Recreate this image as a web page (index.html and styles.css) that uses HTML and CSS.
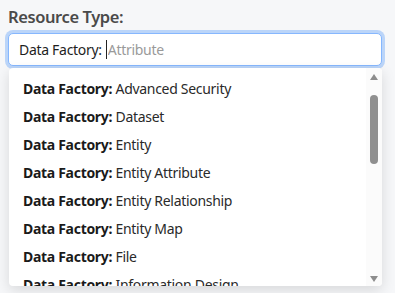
FILE: index.html
```html
<!doctype html>
<html lang="en">
  <head>
    <meta charset="UTF-8" />
    <title>Resource Type</title>
    <link rel="stylesheet" href="styles.css">
  </head>
  <body>
    <div class="field">
      <label for="resource-type">Resource Type:</label>
      <div class="combo">
        <span class="prefix">Data Factory:</span>
        <input id="resource-type" type="text" placeholder="Attribute" />
      </div>
      <div class="dropdown">
        <ul class="options">
          <li><b>Data Factory:</b> Advanced Security</li>
          <li><b>Data Factory:</b> Dataset</li>
          <li><b>Data Factory:</b> Entity</li>
          <li><b>Data Factory:</b> Entity Attribute</li>
          <li><b>Data Factory:</b> Entity Relationship</li>
          <li><b>Data Factory:</b> Entity Map</li>
          <li><b>Data Factory:</b> File</li>
          <li><b>Data Factory:</b> Information Design</li>
        </ul>
        <div class="scrollbar">
          <span class="arrow up"></span>
          <span class="track"><span class="thumb"></span></span>
          <span class="arrow down"></span>
        </div>
      </div>
    </div>
  </body>
</html>
```

FILE: styles.css
```css
* {
  box-sizing: border-box;
  margin: 0;
  padding: 0;
}

body {
  font-family: "Noto Sans", "Open Sans", sans-serif;
  background: #f6f7f9;
  height: 100vh;
  overflow: hidden;
  padding: 5px 13px 0 8px;
}

.field label {
  display: block;
  color: #4a4a4a;
  font-size: 16.5px;
  font-weight: 600;
  letter-spacing: -0.4px;
  line-height: 23px;
  margin-bottom: 5px;
}

.combo {
  display: flex;
  align-items: center;
  height: 33px;
  padding: 0 10px;
  background: #fff;
  border: 1px solid #86b7fe;
  border-radius: 5px;
  box-shadow: 0 0 0 3px rgba(13, 110, 253, 0.25);
  font-size: 14px;
  letter-spacing: -0.3px;
}

.prefix {
  color: #1e1e1e;
  margin-right: 4px;
}

.combo input {
  flex: 1;
  border: none;
  outline: none;
  font: inherit;
  letter-spacing: inherit;
  color: #1e1e1e;
  border-left: 1px solid #222;
  padding-left: 1px;
  height: 19px;
}

.combo input::placeholder {
  color: #9a9a9a;
}

.dropdown {
  display: flex;
  height: 218px;
  margin: 2px 0 0 1px;
  background: #fff;
  border-radius: 4px;
  box-shadow: 0 4px 14px rgba(0, 0, 0, 0.13);
  overflow: hidden;
}

.options {
  flex: 1;
  list-style: none;
  padding: 7px 0 0 14px;
  color: #2a2a2a;
  font-size: 14px;
  letter-spacing: -0.3px;
}

.options li {
  height: 28px;
  line-height: 28px;
  white-space: nowrap;
}

.options b {
  color: #1a1a1a;
}

.scrollbar {
  width: 16px;
  display: flex;
  flex-direction: column;
  align-items: center;
  background: #fbfbfb;
  padding: 6px 0 4px;
}

.arrow {
  width: 0;
  height: 0;
  border-left: 4.5px solid transparent;
  border-right: 4.5px solid transparent;
}

.arrow.up {
  border-bottom: 6px solid #8d8d8d;
}

.arrow.down {
  border-top: 6px solid #8d8d8d;
}

.track {
  flex: 1;
  width: 100%;
  display: flex;
  justify-content: center;
  padding-top: 15px;
}

.thumb {
  width: 8px;
  height: 69px;
  border-radius: 4px;
  background: #8f8f8f;
}
```
